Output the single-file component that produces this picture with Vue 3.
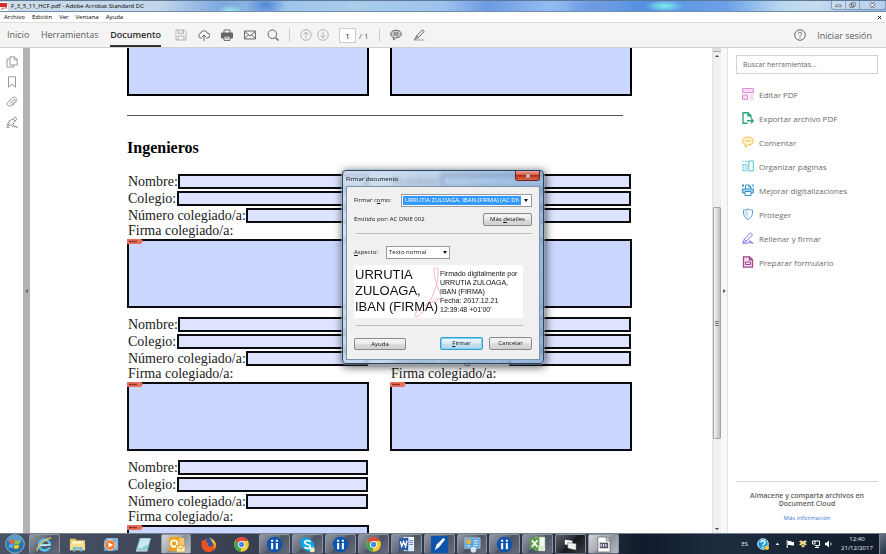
<script setup>
import { ref } from 'vue'

const menus = ['Archivo', 'Edición', 'Ver', 'Ventana', 'Ayuda']
const page = ref('1')
const search = ref('')
const signer = ref('URRUTIA ZULOAGA, IBAN (FIRMA) (AC DNIE 002)')
const aspect = ref('Texto normal')

const tools = [
  { id: 'edit', label: 'Editar PDF' },
  { id: 'export', label: 'Exportar archivo PDF' },
  { id: 'comment', label: 'Comentar' },
  { id: 'organize', label: 'Organizar páginas' },
  { id: 'scan', label: 'Mejorar digitalizaciones' },
  { id: 'protect', label: 'Proteger' },
  { id: 'sign', label: 'Rellenar y firmar' },
  { id: 'form', label: 'Preparar formulario' },
]

const engineers = [1, 2, 3, 4, 5]

const apps = [
  { icon: 'ie', name: 'Internet Explorer', open: true },
  { icon: 'folder', name: 'Explorador' },
  { icon: 'media', name: 'Reproductor' },
  { icon: 'notes', name: 'Bloc de notas' },
  { icon: 'outlook', name: 'Outlook', open: true, hot: true },
  { icon: 'firefox', name: 'Firefox' },
  { icon: 'chrome', name: 'Chrome' },
  { icon: 'ii', name: 'Izenpe', open: true },
  { icon: 'skype', name: 'Skype', open: true },
  { icon: 'ii', name: 'Izenpe 2', open: true },
  { icon: 'chrome', name: 'Chrome 2', open: true },
  { icon: 'word', name: 'Word', open: true },
  { icon: 'pen', name: 'Firma', open: true },
  { icon: 'panel', name: 'Panel de control', open: true },
  { icon: 'ii', name: 'Izenpe 3', open: true },
  { icon: 'excel', name: 'Excel', open: true },
  { icon: 'window', name: 'Ventana', open: true, dark: true },
  { icon: 'pdf', name: 'Acrobat', open: true, hot: true },
]
</script>

<template>
  <div class="desktop">
    <header class="titlebar">
      <svg class="app-icon" viewBox="0 0 8 9"><path d="M0 0h6l2 2v7H0z" fill="#fff" /><path d="M0 1h7v4H0z" fill="#d3302f" /><path d="M1 8c2-2 3-4 2-6 1 3 2 3 4 4-2 0-4 0-6 2z" fill="none" stroke="#c33" stroke-width=".6" /></svg>
      <span class="title">F_3_5_11_HCF.pdf - Adobe Acrobat Standard DC</span>
      <div class="win-buttons">
        <button aria-label="Minimizar"><svg viewBox="0 0 12 9"><rect x="3" y="4.500" width="6" height="2" fill="#fff" stroke="#445" stroke-width=".7" /></svg></button>
        <button aria-label="Restaurar"><svg viewBox="0 0 12 9"><path d="M5 2h4v4H5zM3 3.500h4v3.500H3z" fill="#fff" stroke="#445" stroke-width=".8" /></svg></button>
        <button class="wide" aria-label="Cerrar"><svg viewBox="0 0 12 9"><path d="M3.500 2l5 5M8.500 2l-5 5" stroke="#445" stroke-width="2.600" /><path d="M3.500 2l5 5M8.500 2l-5 5" stroke="#fff" stroke-width="1.200" /></svg></button>
      </div>
    </header>

    <nav class="menubar">
      <button v-for="m in menus" :key="m">{{ m }}</button>
      <button class="close-doc" aria-label="Cerrar documento"><svg viewBox="0 0 6 6"><path d="M1 1l4 4M5 1L1 5" stroke="#222" stroke-width="1.200" /></svg></button>
    </nav>

    <div class="toolbar">
      <nav class="tabs">
        <a href="#inicio">Inicio</a>
        <a href="#herramientas">Herramientas</a>
        <a href="#documento" class="current">Documento</a>
      </nav>
      <div class="actions">
        <button class="dim" aria-label="Guardar"><svg viewBox="0 0 12 12"><path d="M1 1h8.500L11 2.500V11H1zM3.500 1v3.500h5V1M3 11V7h6v4M7 2v1.500" /></svg></button>
        <button aria-label="Subir"><svg viewBox="0 0 12 12"><path d="M4 9H2.800A2.300 2.300 0 0 1 2.500 4.500 3.500 3.500 0 0 1 9.200 4 2.500 2.500 0 0 1 9.300 9H8M6 12V6M4 8l2-2 2 2" /></svg></button>
        <button aria-label="Imprimir"><svg viewBox="0 0 12 12"><path d="M3 4V1h6v3" /><path d="M.5 4h11v5h-2V7h-7v2h-2z" fill="#666" /><path d="M3 7h6v4.400H3zM4.500 9h3" /></svg></button>
        <button aria-label="Correo"><svg viewBox="0 0 12 12"><path d="M.6 2h10.800v8H.6zM.6 2.300L6 7l5.400-4.700M.6 9.700l4-4M11.400 9.700l-4-4" /></svg></button>
        <button aria-label="Buscar"><svg viewBox="0 0 12 12"><circle cx="5.300" cy="5.300" r="4.300" /><path d="M8.500 8.500l3 3" stroke-width="1.500" /></svg></button>
      </div>
      <i class="divider"></i>
      <div class="pager">
        <button class="dim" aria-label="Página anterior"><svg viewBox="0 0 12 12"><circle cx="6" cy="6" r="5.300" /><path d="M6 9.200V3M3.500 5.500L6 3l2.500 2.500" /></svg></button>
        <button class="dim" aria-label="Página siguiente"><svg viewBox="0 0 12 12"><circle cx="6" cy="6" r="5.300" /><path d="M6 2.800V9M3.500 6.500L6 9l2.500-2.500" /></svg></button>
      </div>
      <label class="page-no"><input v-model="page" aria-label="Página"><span>/ 1</span></label>
      <i class="divider"></i>
      <div class="actions">
        <button aria-label="Comentario"><svg viewBox="0 0 12 12"><path d="M6 1.200c3 0 5.300 1.500 5.300 3.800S9 8.800 6 8.800L3.500 11V8.500C1.700 7.900.700 6.600.700 5 .700 2.700 3 1.200 6 1.200z" fill="#ccc" /><path d="M3.500 4h5M3.500 6h5" /></svg></button>
        <button aria-label="Resaltar"><svg viewBox="0 0 12 12"><path d="M1 11h10.500" stroke="#bbb" stroke-width="1.600" /><path d="M3.500 7L9.500.800l1.700 1.600L5.500 8.600zM3.500 7L2.300 9.800l3.200-1.200M2.300 9.800L.800 11" /></svg></button>
      </div>
      <div class="account">
        <button aria-label="Ayuda"><svg viewBox="0 0 12 12"><circle cx="6" cy="6" r="5.300" /><path d="M4.400 4.700c0-2.200 3.300-2 3.200 0C7.500 5.900 6 5.800 6 7.300M6 8.300v1.100" /></svg></button>
        <a href="#sesion">Iniciar sesión</a>
      </div>
    </div>

    <main class="workspace">
      <aside class="rail">
        <button aria-label="Miniaturas"><svg viewBox="0 0 12 12"><path d="M4 .8h4.500l2.700 2.700V9H4zM8.300.800v3h3M4 3H1v8h6.500V9" /></svg></button>
        <button aria-label="Marcadores"><svg viewBox="0 0 12 12"><path d="M2.500.800h7v10.400L6 8l-3.500 3.200z" /></svg></button>
        <button aria-label="Adjuntos"><svg viewBox="0 0 12 12"><path d="M3.500 7.800l4.200-4c1.200-1 2.400.3 1.300 1.500L5 9.400C3 11.300-.300 8.500 1.700 6.300l4.600-4.500c2.600-2.200 6 1 3.800 3.800L6 10" /></svg></button>
        <button aria-label="Firmas"><svg viewBox="0 0 12 12"><path d="M1 10L3 5l4-2 2 2-2 3.500L1.500 10zM1.200 10l3-3.300M7 3L9 .800l2 2L9 5M.500 11.400h3M6 11l2-2 0 2.200 2-1.200v1.300h2" /></svg></button>
      </aside>
      <button class="splitter left" aria-label="Mostrar panel"><i></i></button>

      <section class="document">
        <div class="columns">
          <div class="top-box"></div>
          <div class="top-box"></div>
        </div>
        <hr>
        <h1>Ingenieros</h1>
        <div class="columns people">
          <form v-for="n in engineers" :key="n" class="person" @submit.prevent>
            <div class="line"><label :for="`n${n}`">Nombre:</label><input :id="`n${n}`"></div>
            <div class="line"><label :for="`c${n}`">Colegio:</label><input :id="`c${n}`"></div>
            <div class="line"><label :for="`u${n}`">Número colegiado/a:</label><input :id="`u${n}`"></div>
            <label class="sign-label" :for="`f${n}`">Firma colegiado/a:</label>
            <button :id="`f${n}`" type="button" class="signature">
              <svg viewBox="0 0 16 5"><path d="M0 0h14l2 2-2 3H0z" fill="#e8705a" /><path d="M2 2.500h8" stroke="#7c2a22" stroke-width="1.400" stroke-dasharray="2 .4" /></svg>
            </button>
          </form>
        </div>
      </section>

      <div class="scrollbar">
        <i class="split-box"></i>
        <i class="arrow up"></i>
        <div class="track"><div class="thumb"><i></i></div></div>
        <i class="arrow down"></i>
      </div>
      <button class="splitter right" aria-label="Ocultar panel"><i></i></button>

      <aside class="panel">
        <input v-model="search" class="search" aria-label="Buscar herramientas" placeholder="Buscar herramientas...">
        <ul class="tools">
          <li v-for="t in tools" :key="t.id">
            <a :href="`#${t.id}`">
              <svg viewBox="0 0 12 12" :class="t.id">
                <template v-if="t.id === 'edit'"><path d="M.6.600h10.800v4H.6zM.6 7h4.800v4.400H.6z" fill="#fbe0f7" /><path d="M7.500 7h4M7.500 9h4M7.500 11h4" opacity=".6" /></template>
                <template v-else-if="t.id === 'export'"><path d="M5.500 11.200H1V.800h5l3 3V6M6 .8v3h3M5 8.800h6M9 6.500l2.300 2.300L9 11.200" stroke-width="1.400" /></template>
                <template v-else-if="t.id === 'comment'"><path d="M6 1c3 0 5.400 1.500 5.400 4S9 9 6 9l-2.500 2.500V8.700C1.600 8 .6 6.700.6 5 .6 2.500 3 1 6 1z" fill="#fff3c8" /><path d="M3.500 5h5" /></template>
                <template v-else-if="t.id === 'organize'"><path d="M6.800 1h4.500v10H6.800z" /><path d="M.8 4.500H5V11H.8zM.8 1v2M3 1h2v2" stroke-dasharray="1.200 .8" fill="#cdeff5" /></template>
                <template v-else-if="t.id === 'scan'"><path d="M3.500 5V1H7l2 2v2M7 1v2h2M1 0v3M0 1.500h2M11 0v3" /><path d="M.6 5h10.800v4H.6z" fill="#a5d6ef" /><path d="M3 7.500h6v4H3z" fill="#fff" /></template>
                <template v-else-if="t.id === 'protect'"><path d="M6 .8c1.500 1 3 1.300 4.600 1.300 0 4.500-.6 7.500-4.600 9.200C2 9.600 1.400 6.600 1.400 2.100 3 2.100 4.500 1.800 6 .800z" /><path d="M6 1.500v9C3 9 2.200 6 2.200 3z" fill="#cfe4f7" stroke="none" /></template>
                <template v-else-if="t.id === 'sign'"><path d="M.8 11.200l1.500-4L8.500.800l2 2L4.300 9.200zM2.300 7.200l2 2M.8 11.200h5L8 8.500v2.700l1.700-1.500v1.500h2" /></template>
                <template v-else><path d="M1.500.800h6l3 3v7.400h-9zM7.500.800v3h3" fill="#f4dff0" stroke-width="1.300" /><path d="M3.500 6h5v2.500h-5z" /></template>
              </svg>
              {{ t.label }}
            </a>
          </li>
        </ul>
        <footer>
          <strong>Almacene y comparta archivos en Document Cloud</strong>
          <a href="#info">Más información</a>
        </footer>
      </aside>
    </main>

    <footer class="taskbar">
      <button class="start" aria-label="Inicio">
        <svg viewBox="0 0 20 20"><circle cx="10" cy="10" r="9.300" fill="#2a6fa5" stroke="#89b8d8" /><ellipse cx="10" cy="6" rx="7" ry="4.500" fill="#7fb9dd" opacity=".6" /><path d="M5 6c2-1 3-.5 4.500 0L9 9.500c-2-.7-3-.7-4.800 0z" fill="#ee5a2b" /><path d="M10.300 6.300c1.700.7 3 .5 4.700-.3l-.7 3.700c-1.500.8-3 .6-4.500 0z" fill="#8cc63f" /><path d="M4 10.500c1.800-.8 3-.6 4.700 0L8 14c-1.500-.7-3-.7-4.500 0z" fill="#4db5ee" /><path d="M9.600 10.800c1.600.6 3 .6 4.600-.2l-.8 3.600c-1.500.8-3 .6-4.500 0z" fill="#fdd017" /></svg>
      </button>
      <ul class="apps">
        <li v-for="a in apps" :key="a.name">
          <button :class="{ open: a.open, hot: a.hot, dark: a.dark }" :aria-label="a.name">
            <svg viewBox="0 0 18 18">
              <template v-if="a.icon === 'ie'"><circle cx="9" cy="9.500" r="5.700" fill="none" stroke="#4fc3f3" stroke-width="3" /><path d="M4 9.700h11" stroke="#bdeaff" stroke-width="2.200" /><path d="M11 11.200h6" stroke="#4a5060" stroke-width="1.500" /><path d="M1.500 16C0 13 8 3 16.500 2" fill="none" stroke="#f5c945" stroke-width="1.300" /></template>
              <template v-else-if="a.icon === 'folder'"><path d="M1 3h6l1 1.500h9V15H1z" fill="#e7c565" /><path d="M3 5.500h12V12H3z" fill="#fff6cf" /><path d="M1 8h16v7H1z" fill="#f5dd8a" /><path d="M4 16.500V12h10v4.500h-2.500V14h-5v2.500z" fill="#69b9df" /></template>
              <template v-else-if="a.icon === 'media'"><rect x="4" y="2" width="13" height="13" rx="1" fill="#8bb9dc" /><rect x="2" y="4" width="12" height="12" fill="#5f9ccc" /><circle cx="8.500" cy="9.500" r="5.500" fill="#f0792a" stroke="#fff" stroke-width=".7" /><path d="M6.800 6.500v6l5-3z" fill="#fff" /></template>
              <template v-else-if="a.icon === 'notes'"><path d="M5 2h12l-3.500 13H1z" fill="#8ccbd7" /><path d="M6 3h10l-2 6-7 4H3z" fill="#c6e8ee" /><path d="M1 15h12.500l-.5 1.500H1z" fill="#e8eef0" /></template>
              <template v-else-if="a.icon === 'outlook'"><path d="M1 1h12v15H1z" fill="#eda11d" /><path d="M12 2h5v12h-5z" fill="#f7c865" /><circle cx="6.500" cy="8" r="3.400" fill="none" stroke="#fff" stroke-width="2" /><path d="M9 10h9v7H9z" fill="#fff1bd" stroke="#d9951c" stroke-width=".7" /><path d="M9 10l4.500 4 4.500-4" fill="none" stroke="#d9951c" /></template>
              <template v-else-if="a.icon === 'firefox'"><circle cx="9.500" cy="9" r="7" fill="#2a55a8" /><path d="M2 4l2 1c1-2 3-2 4-2-2 1-2 3-1 4l3 1c-3 1-1 4 2 3 3-1 3-5 1-8 3 2 5 5 4 8-1 4-5 6-8 6-5 0-9-5-7-13z" fill="#e9531f" /><path d="M10 1c2 2 5 3 6 6 1 2 1 5-1 7 1-4 0-6-2-7 0-2-2-3-3-6z" fill="#fcc62c" /></template>
              <template v-else-if="a.icon === 'chrome'"><circle cx="9" cy="9" r="7.800" fill="#f5c92f" /><path d="M9 9L2.200 5.200A7.800 7.800 0 0 1 16 5.300H9z" fill="#dd4b3c" /><path d="M9 9L8 16.700A7.800 7.800 0 0 1 2.200 5.200z" fill="#40a552" /><circle cx="9" cy="9" r="3.800" fill="#fff" /><circle cx="9" cy="9" r="2.900" fill="#4a87e8" /></template>
              <template v-else-if="a.icon === 'ii'"><circle cx="9" cy="9" r="8.200" fill="#0d53b0" /><path d="M6.500 7.500V14M11.500 7.500V14M6.500 4v2M11.500 4v2" stroke="#fff" stroke-width="2.200" /></template>
              <template v-else-if="a.icon === 'skype'"><circle cx="6.500" cy="6.500" r="5" fill="#0ba9e6" /><circle cx="11" cy="11" r="5.500" fill="#0ba9e6" /><circle cx="9" cy="9" r="6.500" fill="#0ba9e6" /><path d="M12 6.500C11 4 6 4.500 6 7c0 2.500 6 1.500 6 4s-5 3-6.200.5" fill="none" stroke="#fff" stroke-width="1.800" /><circle cx="14" cy="14.500" r="2.700" fill="#e6f3c0" /></template>
              <template v-else-if="a.icon === 'word'"><path d="M6 1h11v15H6z" fill="#f4f8ff" /><path d="M12 5h4M12 7h4M12 9h4" stroke="#4b77bd" /><path d="M1 3l10-1.500v14L1 14z" fill="#285ba9" /><path d="M2.500 5.500L4 11l2-5 2 5 1.500-6" fill="none" stroke="#fff" stroke-width="1.500" /><path d="M11 11h6v5h-6z" fill="#dbe7f7" /></template>
              <template v-else-if="a.icon === 'pen'"><path d="M0 0h18v18H0z" fill="#0e54ab" /><path d="M4 15L6 9l7-7 2 1.500-6 8z" fill="#fff" /></template>
              <template v-else-if="a.icon === 'panel'"><path d="M1 2h16v11H1z" fill="#5ba4d8" stroke="#b7d8ee" stroke-width=".8" /><circle cx="5" cy="6" r="2.700" fill="#e7b04a" /><path d="M10 5h5M10 7.500h5M3 10.500h4M10 10h5" stroke="#dff1ff" /><circle cx="10" cy="14.500" r="3" fill="#d6e7f3" /></template>
              <template v-else-if="a.icon === 'excel'"><path d="M6 1h11v14H6z" fill="#f3faf0" stroke="#76a96b" stroke-width=".6" /><path d="M1 2.500L11 1v14L1 13.500z" fill="#5d9f45" /><path d="M3 4.500l6 7M9 4.500l-6 7" stroke="#fff" stroke-width="1.800" /><path d="M10 10h7v6h-7z" fill="#dcebd4" /></template>
              <template v-else-if="a.icon === 'window'"><path d="M3 4l8 1v5l-8-1z" fill="#fff" /><path d="M6 7l9 1v7l-9-2z" fill="#eef4f2" stroke="#333" stroke-width=".5" /></template>
              <template v-else><path d="M3 1h9l4 3.500V17H3z" fill="#fff" stroke="#777" /><path d="M12 1v4h4" fill="#ddd" stroke="#777" /><path d="M5 7h9v6H5z" fill="#53556b" /><path d="M6.500 8.500v3M9 8.500v3M11.500 8.500v3" stroke="#e6d4e8" stroke-width="1.400" /></template>
            </svg>
          </button>
        </li>
      </ul>
      <div class="tray">
        <span class="lang">ES</span>
        <svg class="help" viewBox="0 0 12 12"><circle cx="6" cy="6" r="5.300" fill="#1c9cd8" stroke="#d9f0fb" /><path d="M4 4.500c0-2.500 4-2.300 4 0 0 1.500-2 1.500-2 3M6 8.500V10" fill="none" stroke="#fff" stroke-width="1.400" /><circle cx="10" cy="9.700" r="2.200" fill="#f4c836" /></svg>
        <svg class="tiny" viewBox="0 0 8 8"><path d="M2 5l2-2.500L6 5z" fill="#fff" /></svg>
        <svg viewBox="0 0 8 8"><path d="M1.200 0v8" stroke="#fff" /><path d="M2 1h3l.5 1H8v3.500H5L4.500 5H2z" fill="#fff" /></svg>
        <svg viewBox="0 0 8 8"><path d="M0 1.500L2 .3l2 1.300L6 .3l2 1.200-2 1.400 2 1.300-2 1.200L4 4 2 5.400 0 4.200l2-1.300zM2 6l2-1.300L6 6 4 7.500z" fill="#f4d989" /></svg>
        <svg viewBox="0 0 8 8"><path d="M.5 1h2.500v3H.5zM2.500 1h5v4.500H3M3 7.500h4M5 5.500v2" fill="none" stroke="#fff" /></svg>
        <svg viewBox="0 0 8 8"><path d="M0 2.700h1.500L4 .5v7L1.500 5.300H0z" fill="#fff" /><path d="M5.500 2.500c1 1 1 2 0 3" fill="none" stroke="#fff" stroke-width=".8" /></svg>
        <time class="clock">12:40<br>21/12/2017</time>
        <button class="show-desktop" aria-label="Mostrar escritorio"></button>
      </div>
    </footer>

    <section class="dialog" role="dialog" aria-labelledby="dlg-title">
      <header>
        <h2 id="dlg-title">Firmar documento</h2>
        <button aria-label="Cerrar"><svg viewBox="0 0 8 8"><path d="M1.500 1.500l5 5M6.500 1.500l-5 5" stroke="#7b2018" stroke-width="2.600" /><path d="M1.500 1.500l5 5M6.500 1.500l-5 5" stroke="#fff" stroke-width="1.500" /></svg></button>
      </header>
      <form class="body" @submit.prevent>
        <div class="row">
          <label for="signer" class="signer-label">Firmar c<u>o</u>mo:</label>
          <span class="combo grow selected"><select id="signer" v-model="signer"><option>URRUTIA ZULOAGA, IBAN (FIRMA) (AC DNIE 002)</option></select><i></i></span>
        </div>
        <div class="row issuer">
          <span>Emitido por: AC DNIE 002</span>
          <button type="button" class="details">Más <u>d</u>etalles</button>
        </div>
        <hr>
        <div class="row aspect">
          <label for="aspect"><u>A</u>specto:</label>
          <span class="combo"><select id="aspect" v-model="aspect"><option>Texto normal</option></select><i></i></span>
        </div>
        <div class="preview">
          <svg viewBox="0 0 30 52"><path d="M24 2c-3 1-2 8 0 14 2 7 4 13 6 16M25 2c2 4 1 12-1 19C20 34 11 49 5 51c-4 1-2-4 3-8 6-5 13-7 20-10" /></svg>
          <p class="who">URRUTIA ZULOAGA, IBAN (FIRMA)</p>
          <p class="stamp">Firmado digitalmente por URRUTIA ZULOAGA, IBAN (FIRMA)<br>Fecha: 2017.12.21<br>12:39:48 +01'00'</p>
        </div>
        <hr class="short">
        <div class="buttons">
          <button type="button" class="help-btn">Ayuda</button>
          <button type="submit" class="primary"><u>F</u>irmar</button>
          <button type="button">Cancelar</button>
        </div>
      </form>
    </section>
  </div>
</template>

<style>
html, body { margin: 0; }
body { overflow: hidden; }
</style>

<style scoped>
* { box-sizing: border-box; }
button, input, select { font: inherit; color: inherit; margin: 0; padding: 0; border: 0; background: none; }
a { color: inherit; text-decoration: none; }
ul { list-style: none; margin: 0; padding: 0; }
svg { display: block; }

.desktop { position: relative; display: flex; flex-direction: column; height: 100vh; min-height: 400px; overflow: hidden; background: #fff; color: #111; font-family: "Open Sans", "Noto Sans", sans-serif; font-size: 6px; }

/* window chrome */
.titlebar { display: flex; align-items: center; flex: none; height: 12px; border-top: 1px solid #5b7896; border-bottom: 1px solid #6f8fae;
  background:
    radial-gradient(ellipse 20px 6px at 75% 50%, #7ff0ee, transparent),
    radial-gradient(ellipse 14px 6px at 26% 100%, #9fe6ee, transparent),
    radial-gradient(ellipse 20px 12px at 30% 40%, #4f86d8, transparent),
    radial-gradient(ellipse 30px 12px at 67% 60%, #6c97e2, transparent),
    linear-gradient(100deg, #cfdce8 0, #c3d7ea 18%, #7ea8de 25%, #9fc6ec 33%, #a9cdea 40%, #9dc3ee 50%, #6c9ae2 55%, #93bdf0 62%, #558fe0 72%, #6da0e8 82%, #b7d8ee 88%, #c8dcee 92%, #8eb2e0); }
.app-icon { width: 8px; height: 9px; margin-right: 3px; }
.title { line-height: 9px; color: #000; white-space: nowrap; }
.win-buttons { display: flex; align-self: flex-start; margin-left: auto; border: 1px solid #7f9cba; border-top: 0; border-radius: 0 0 3px 3px; background: rgba(215, 230, 245, .55); }
.win-buttons button { display: grid; place-items: center; width: 14px; height: 8px; border-right: 1px solid #8aa6c4; }
.win-buttons .wide { width: 25px; border: 0; }
.win-buttons svg { width: 11px; height: 8px; }

.menubar { display: flex; align-items: center; flex: none; gap: 7px; height: 11px; padding: 0 4px; background: #fff; border-bottom: 1px solid #ddd; color: #000; line-height: 9px; }
.close-doc { margin-left: auto; }
.close-doc svg { width: 5px; height: 5px; }

.toolbar { display: flex; align-items: center; flex: none; height: 25px; background: #f4f4f4; border-bottom: 1px solid #cfcfcf; color: #5c5c5c; font-size: 9px; }
.toolbar svg { width: 12px; height: 12px; fill: none; stroke: #666; stroke-width: 1; }
.toolbar .dim svg { stroke: #b4b4b4; }
.tabs { display: flex; align-self: stretch; flex: none; justify-content: space-between; width: 161px; padding-left: 7px; margin-right: 14px; }
.tabs a { line-height: 23px; border-bottom: 2px solid transparent; }
.tabs .current { color: #2b2b2b; font-weight: 600; border-color: #333; }
.actions { display: flex; gap: 11px; }
.pager { display: flex; gap: 5px; }
.divider { width: 1px; height: 14px; margin: 0 10px; background: #cfcfcf; }
.page-no { display: flex; align-items: center; gap: 3px; margin-left: 10px; font-size: 8px; }
.page-no input { width: 17px; height: 15px; border: 1px solid #ccc; background: #fff; text-align: center; color: #222; }
.account { display: flex; align-items: center; gap: 11px; margin-left: auto; padding-right: 14px; }

/* work area */
.workspace { display: flex; flex: 1; min-height: 0; }
.rail { display: flex; flex-direction: column; flex: none; gap: 8px; width: 23px; padding: 8px 0 0 6px; }
.rail svg { width: 12px; height: 12px; fill: none; stroke: #9a9a9a; stroke-width: 1; }
.splitter { display: flex; align-items: center; justify-content: center; flex: none; width: 7px; }
.splitter i { border: 2px solid transparent; }
.splitter.left { background: #b3b3b3; }
.splitter.left i { border-right: 3px solid #666; border-left: 0; }
.splitter.right { background: #f8f8f8; border-right: 1px solid #e2e2e2; }
.splitter.right i { border-left: 3px solid #666; border-right: 0; }

.document { flex: 1; min-width: 0; overflow: hidden; padding: 0 80px 0 97px; font-family: "Liberation Serif", serif; color: #1a1a1a; }
.columns { display: grid; grid-template-columns: repeat(2, minmax(0, 1fr)); column-gap: 21px; }
.top-box { height: 48px; border: 2px solid #000; border-top: 0; background: #ccd7ff; }
.document hr { height: 1px; margin: 19px 9px 22px 0; border: 0; background: #555; }
h1 { margin: 0 0 16px; font-size: 16px; line-height: 20px; color: #000; }
.people { row-gap: 9px; }
.person { display: flex; flex-direction: column; font-size: 14px; line-height: 16px; }
.line { display: flex; height: 15px; margin: 0 1px 2px; }
.line label { flex: none; min-width: 49px; white-space: nowrap; }
.line input { flex: 1; min-width: 0; border: 2px solid #0c0c10; background: #dee3ff; font-size: 10px; }
.sign-label { margin: -2px 1px 0; }
.signature { display: flex; align-items: flex-start; height: 69px; border: 2px solid #0c0c10; background: #ccd7ff; }
.signature svg { width: 16px; height: 5px; margin: -2px 0 0 -2px; }

.scrollbar { display: flex; flex-direction: column; align-items: center; flex: none; width: 9px; background: #efefef; border-left: 1px solid #e2e2e2; }
.split-box { align-self: stretch; height: 4px; background: #e0e0e0; border-bottom: 1px solid #aaa; }
.arrow { margin: 3px 0; border: 2px solid transparent; }
.arrow.up { border-top: 0; border-bottom: 2px solid #444; }
.arrow.down { border-bottom: 0; border-top: 2px solid #444; }
.track { flex: 1; align-self: stretch; padding-top: 147px; }
.thumb { display: grid; place-items: center; height: 73%; border: 1px solid #a5a5a5; border-radius: 1px; background: linear-gradient(90deg, #f6f6f6, #d4d4d8 60%, #bfbfc4); }
.thumb i { width: 4px; height: 5px; background: repeating-linear-gradient(#777 0 1px, #ddd 1px 2px); }

.panel { display: flex; flex-direction: column; flex: none; width: 158px; padding: 7px 8px 0; color: #6c6c6c; font-size: 7px; }
.search { height: 19px; padding: 0 6px; border: 1px solid #d2d2d2; background: #fff; }
.search::placeholder { color: #666; opacity: 1; }
.tools { margin-top: 8px; font-size: 8px; }
.tools a { display: flex; align-items: center; gap: 5px; height: 24px; padding-left: 6px; white-space: nowrap; }
.tools svg { width: 12px; height: 12px; fill: none; stroke-width: 1; stroke: currentColor; }
.edit { color: #dd86d5; }
.export { color: #2fa583; }
.comment { color: #f3bd50; }
.organize { color: #52bfd2; }
.scan { color: #3593c9; }
.protect { color: #4f94d4; }
.sign { color: #8273e6; }
.form { color: #a3458f; }
.panel footer { margin-top: auto; height: 52px; padding-top: 10px; border-top: 1px solid #d9d9d9; text-align: center; font-size: 6px; line-height: 8px; }
.panel footer strong { display: block; margin-bottom: 6px; padding: 0 8px; color: #5c5c5c; font-size: 7px; font-weight: 600; }
.panel footer a { color: #3a7bd0; }

/* taskbar */
.taskbar { display: flex; flex: none; height: 21px; border-top: 1px solid #77808e; background: linear-gradient(90deg, #4a5366, #363e4f 30%, #262e3e 68%, #101b2b 72%, #1d2d40 82%, #101a28); color: #eee; }
.start { flex: none; display: grid; place-items: center; width: 29px; }
.start svg { width: 20px; height: 20px; }
.apps { display: flex; gap: 2px; flex: 0 1 590px; }
.apps li { flex: 1; min-width: 0; }
.apps button { display: grid; place-items: center; width: 100%; height: 20px; }
.apps svg { width: 17px; height: 17px; }
.apps .open { border: 1px solid #8d94a0; border-bottom-color: #5c6473; border-radius: 2px; background: linear-gradient(135deg, #9299a6, #626977 45%, #4b5261 50%, #666d7c); }
.apps .hot { background: linear-gradient(135deg, #d2d5da, #a6abb4 45%, #8a8f9a 50%, #b9bdc4); }
.apps .dark { background: linear-gradient(135deg, #5c636c, #262c33 45%, #15191d 50%, #343b40); }
.tray { display: flex; align-items: center; gap: 5px; margin-left: auto; }
.tray svg { width: 8px; height: 8px; }
.tray .help { width: 12px; height: 12px; }
.tray .tiny { width: 7px; }
.lang { margin-right: 4px; }
.clock { width: 34px; margin-left: 2px; text-align: center; line-height: 9px; white-space: nowrap; }
.show-desktop { align-self: stretch; width: 7px; border-left: 1px solid #7a8594; background: linear-gradient(135deg, #6a7585, #253244); }

/* signing dialog */
.dialog { position: absolute; left: 342px; top: 170px; width: 202px; padding: 0 3px 3px; border: 1px solid #2f4358; border-radius: 4px; background: linear-gradient(100deg, rgba(205, 222, 240, .8), rgba(150, 185, 222, .75) 60%, rgba(130, 170, 212, .8)); backdrop-filter: blur(2px); box-shadow: 0 0 1px 1px rgba(160, 200, 230, .5), 1px 2px 8px 1px rgba(0, 0, 0, .65); color: #111; }
.dialog header { display: flex; align-items: center; height: 15px; }
h2 { margin: 0; font-size: 6px; font-weight: 400; line-height: 8px; color: #000; }
.dialog header button { display: grid; place-items: center; align-self: flex-start; width: 25px; height: 10px; margin-left: auto; border: 1px solid #6e231c; border-top: 0; border-radius: 0 0 3px 3px; background: linear-gradient(#e8a595, #cf5a45 45%, #b92d17 50%, #d4694f); }
.dialog header svg { width: 6px; height: 6px; }
.body { padding: 6px 7px 9px; border: 1px solid #7e93a8; background: #f0f0f0; }
.row { display: flex; align-items: center; height: 14px; }
.signer-label { width: 47px; }
.combo { display: flex; align-items: center; height: 13px; border: 1px solid #999; background: #fff; }
.combo select { appearance: none; flex: 1; min-width: 0; height: 9px; padding: 0 2px; line-height: 9px; outline: none; overflow: hidden; }
.combo i { flex: none; margin: 1px 3px 0; border: 2px solid transparent; border-top: 3px solid #111; border-bottom: 0; }
.grow { flex: 1; min-width: 0; padding-left: 1px; }
.selected select { background: #3399ff; color: #fff; }
.issuer { justify-content: space-between; margin-top: 5px; }
.body hr { height: 1px; margin: 7px 0 11px 2px; border: 0; background: #bdbdbd; }
.aspect .combo { width: 64px; margin-left: 6px; }
.aspect .combo i { margin-right: 2px; }
.aspect label { min-width: 26px; }
.preview { position: relative; display: flex; width: 169px; height: 53px; margin-top: 6px; background: #fff; font-family: "Liberation Sans", sans-serif; color: #111; }
.preview p { position: relative; margin: 0; }
.preview svg { position: absolute; left: 58px; top: 0; width: 30px; height: 53px; fill: none; stroke: #f6b9bd; stroke-width: 1; }
.who { width: 86px; flex: none; padding: 2px 0 0 1px; font-size: 13px; line-height: 16px; }
.stamp { padding-top: 4px; font-size: 7px; line-height: 9px; }
.body hr.short { margin: 7px 9px 11px 2px; }
.buttons { display: flex; align-items: center; gap: 6px; }
.buttons button, .details { height: 13px; width: 43px; border: 1px solid #8a8a8a; border-radius: 2px; background: linear-gradient(#f4f4f4, #ebebeb 48%, #dcdcdc 52%, #d0d0d0); text-align: center; line-height: 11px; }
.details { width: 49px; }
.buttons .help-btn { width: 52px; height: 12px; line-height: 10px; margin-right: auto; }
.buttons .primary { border-color: #3b9fce; background: linear-gradient(#eaf6fd, #dcedf8 48%, #c4dff0 52%, #b5d5ea); box-shadow: inset 0 0 0 1px #7fd0f2; }
</style>
